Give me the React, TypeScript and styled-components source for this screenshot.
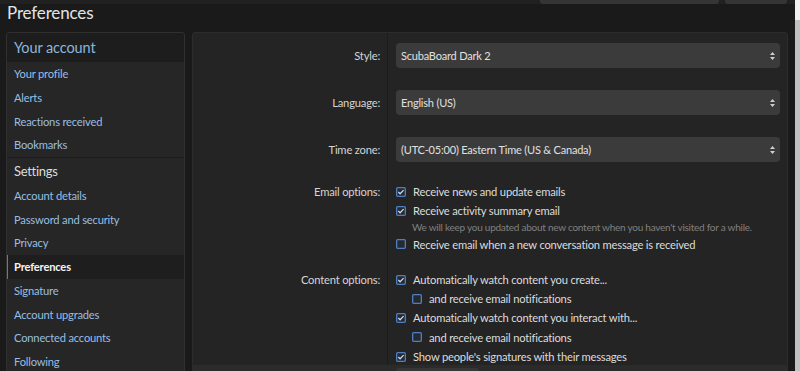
import React from "react";
import styled, { createGlobalStyle } from "styled-components";

const Global = createGlobalStyle`
  html, body { margin: 0; padding: 0; background: #1a1a1a; }
  body { font-family: Lato, "Noto Sans", sans-serif; }
  * { box-sizing: border-box; }
`;

const Page = styled.div`
  width: 800px;
  height: 371px;
  overflow: hidden;
  display: flex;
  background: #1a1a1a;
`;

const Content = styled.div`
  flex: 1;
  min-width: 0;
  display: flex;
  flex-direction: column;
`;

const Scrollbar = styled.div`
  width: 5px;
  flex-shrink: 0;
  background: #f1f1f1;
  display: flex;
  flex-direction: column;
  padding-top: 20px;
`;

const ScrollThumb = styled.div`
  flex: 1;
  background: #c1c1c1;
`;

const TopBar = styled.div`
  height: 4px;
  flex-shrink: 0;
  background: #212121;
  display: flex;
  justify-content: flex-end;
  gap: 6px;
  padding-right: 8px;
`;

const TopButton = styled.div<{ $w: number }>`
  width: ${(p) => p.$w}px;
  background: #353535;
  border-radius: 0 0 3px 3px;
`;

const Title = styled.h1`
  margin: 0;
  padding: 0 7px;
  height: 28px;
  flex-shrink: 0;
  font-size: 17px;
  letter-spacing: -0.15px;
  font-weight: 400;
  line-height: 18px;
  color: #e4e4e4;
`;

const Body = styled.div`
  display: flex;
  align-items: flex-start;
  gap: 7px;
  padding: 0 7px 0 6px;
`;

const Sidebar = styled.nav`
  width: 179px;
  flex-shrink: 0;
  background: #262626;
  border: 1px solid #303030;
  border-radius: 3px;
  overflow: hidden;
`;

const NavHeader = styled.div`
  height: 29px;
  display: flex;
  align-items: center;
  padding: 0 7px;
  background: #1d1d1d;
  color: #8db6dc;
  font-size: 14.5px;
  letter-spacing: -0.1px;
`;

const NavSection = styled.div`
  height: 27px;
  display: flex;
  align-items: center;
  padding: 0 7px;
  border-top: 1px solid #1d1d1d;
  color: #dcdcdc;
  font-size: 13px;
  letter-spacing: -0.3px;
`;

const NavItem = styled.div<{ $active?: boolean }>`
  height: 23.7px;
  display: flex;
  align-items: center;
  padding: 0 7px;
  font-size: 11.2px;
  letter-spacing: -0.2px;
  white-space: nowrap;
  color: ${(p) => (p.$active ? "#f4f4f4" : "#98bee2")};
  font-weight: ${(p) => (p.$active ? 700 : 400)};
  background: ${(p) => (p.$active ? "#1e1e1e" : "transparent")};
  ${(p) =>
    p.$active
      ? "margin-left: -1px; border-left: 2px solid #4a7fc0; padding-left: 6px;"
      : ""}
`;

const Panel = styled.div`
  flex: 1;
  min-width: 0;
  background: #242424;
  border: 1px solid #2c2c2c;
  border-radius: 3px;
  display: flex;
  flex-direction: column;
`;

const Rows = styled.div`
  height: 332px;
  overflow: hidden;
  flex-shrink: 0;
`;

const FormRow = styled.div`
  display: grid;
  grid-template-columns: 195px 1fr;
`;

const Label = styled.div<{ $tall?: boolean }>`
  border-right: 1px solid #1c1c1c;
  text-align: right;
  padding: ${(p) => (p.$tall ? "10px 7px 12px" : "9px 7px")};
  font-size: 11.2px;
  letter-spacing: -0.2px;
  line-height: ${(p) => (p.$tall ? "25px" : "17.3px")};
  color: #d4d4d4;
`;

const Field = styled.div<{ $tall?: boolean }>`
  padding: ${(p) => (p.$tall ? "10px 7px 12px 8px" : "9px 7px 9px 8px")};
  display: flex;
  flex-direction: column;
  gap: 2px;
`;

const Select = styled.div`
  height: 25px;
  background: #3b3b3b;
  border-radius: 4px;
  display: flex;
  align-items: center;
  justify-content: space-between;
  padding: 0 3px 0 5px;
  font-size: 11px;
  letter-spacing: -0.2px;
  color: #e0e0e0;
`;

const CheckRow = styled.div<{ $sub?: boolean }>`
  display: flex;
  align-items: center;
  gap: 7px;
  line-height: 17.3px;
  font-size: 11.2px;
  letter-spacing: -0.2px;
  color: #dcdcdc;
  white-space: nowrap;
  margin-left: ${(p) => (p.$sub ? "16px" : "0")};
`;

const Hint = styled.div`
  margin: -2px 0 0 16px;
  font-size: 10px;
  letter-spacing: -0.25px;
  line-height: 14px;
  white-space: nowrap;
  color: #808080;
`;

const Footer = styled.div`
  height: 40px;
  background: #2b2b2b;
  display: grid;
  grid-template-columns: 195px 1fr;
`;

const FooterButton = styled.div`
  margin: 3px 0 0 8px;
  width: 83px;
  height: 30px;
  background: #363636;
  border-radius: 3px;
`;

const Arrows = () => (
  <svg width="9" height="10" viewBox="0 0 9 10">
    <path d="M4.5 1 L7 4 H2 Z M4.5 9 L7 6 H2 Z" fill="#cfcfcf" />
  </svg>
);

const Box = ({ checked }: { checked: boolean }) => (
  <svg width="10" height="10" viewBox="0 0 10 10" style={{ flexShrink: 0 }}>
    <rect x="0.65" y="0.65" width="8.7" height="8.7" rx="1" fill="#262a30" stroke="#4f7fc0" strokeWidth="1.3" />
    {checked && (
      <path d="M2.3 5 L4.1 6.8 L7.6 3.1" fill="none" stroke="#c9d9ef" strokeWidth="1.25" />
    )}
  </svg>
);

const Check = ({ checked, sub, children }: { checked: boolean; sub?: boolean; children: React.ReactNode }) => (
  <CheckRow $sub={sub}>
    <Box checked={checked} />
    <span>{children}</span>
  </CheckRow>
);

export default function App() {
  return (
    <Page>
      <Global />
      <Content>
        <TopBar>
          <TopButton $w={179} />
          <TopButton $w={62} />
        </TopBar>
        <Title>Preferences</Title>
        <Body>
          <Sidebar>
            <NavHeader>Your account</NavHeader>
            <NavItem>Your profile</NavItem>
            <NavItem>Alerts</NavItem>
            <NavItem>Reactions received</NavItem>
            <NavItem>Bookmarks</NavItem>
            <NavSection>Settings</NavSection>
            <NavItem>Account details</NavItem>
            <NavItem>Password and security</NavItem>
            <NavItem>Privacy</NavItem>
            <NavItem $active>Preferences</NavItem>
            <NavItem>Signature</NavItem>
            <NavItem>Account upgrades</NavItem>
            <NavItem>Connected accounts</NavItem>
            <NavItem>Following</NavItem>
          </Sidebar>
          <Panel>
            <Rows>
              <FormRow>
                <Label $tall>Style:</Label>
                <Field $tall>
                  <Select>
                    <span>ScubaBoard Dark 2</span>
                    <Arrows />
                  </Select>
                </Field>
              </FormRow>
              <FormRow>
                <Label $tall>Language:</Label>
                <Field $tall>
                  <Select>
                    <span>English (US)</span>
                    <Arrows />
                  </Select>
                </Field>
              </FormRow>
              <FormRow>
                <Label $tall>Time zone:</Label>
                <Field $tall>
                  <Select>
                    <span>(UTC-05:00) Eastern Time (US &amp; Canada)</span>
                    <Arrows />
                  </Select>
                </Field>
              </FormRow>
              <FormRow>
                <Label>Email options:</Label>
                <Field>
                  <Check checked>Receive news and update emails</Check>
                  <Check checked>Receive activity summary email</Check>
                  <Hint>We will keep you updated about new content when you haven't visited for a while.</Hint>
                  <Check checked={false}>Receive email when a new conversation message is received</Check>
                </Field>
              </FormRow>
              <FormRow>
                <Label>Content options:</Label>
                <Field>
                  <Check checked>Automatically watch content you create...</Check>
                  <Check checked={false} sub>and receive email notifications</Check>
                  <Check checked>Automatically watch content you interact with...</Check>
                  <Check checked={false} sub>and receive email notifications</Check>
                  <Check checked>Show people's signatures with their messages</Check>
                </Field>
              </FormRow>
            </Rows>
            <Footer>
              <div />
              <FooterButton />
            </Footer>
          </Panel>
        </Body>
      </Content>
      <Scrollbar>
        <ScrollThumb />
      </Scrollbar>
    </Page>
  );
}
